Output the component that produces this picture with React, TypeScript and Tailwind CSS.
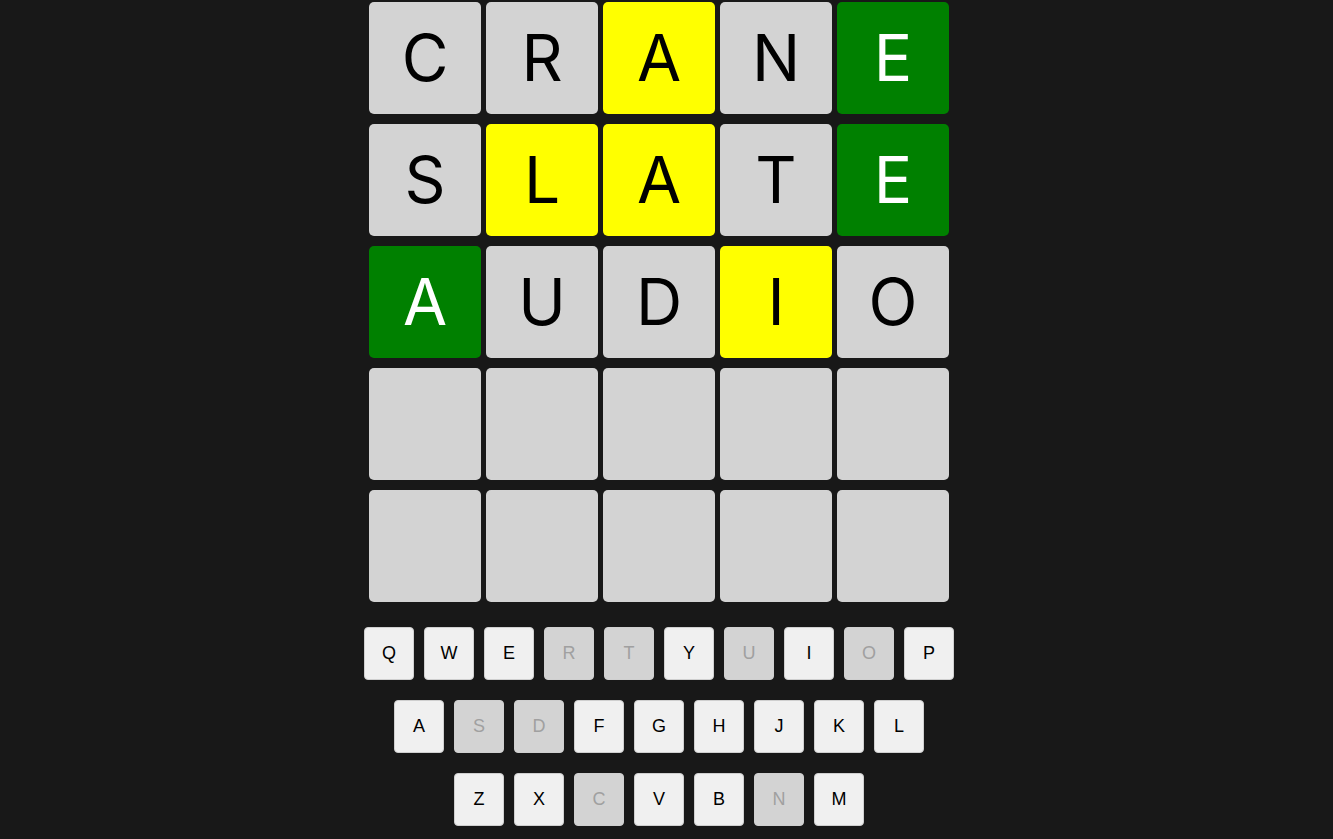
import React from "react";

type Tile = { letter: string; state: "gray" | "yellow" | "green" | "empty" };

const guesses = [
  ["C", "R", "A", "N", "E"],
  ["S", "L", "A", "T", "E"],
  ["A", "U", "D", "I", "O"],
];
const states: Tile["state"][][] = [
  ["gray", "gray", "yellow", "gray", "green"],
  ["gray", "yellow", "yellow", "gray", "green"],
  ["green", "gray", "gray", "yellow", "gray"],
];

const rows: Tile[][] = Array.from({ length: 5 }, (_, r) =>
  Array.from({ length: 5 }, (_, c) =>
    guesses[r] ? { letter: guesses[r][c], state: states[r][c] } : { letter: "", state: "empty" as const },
  ),
);

const tileClass = {
  gray: "bg-[#d3d3d3] text-black",
  empty: "bg-[#d3d3d3] text-black",
  yellow: "bg-[#ffff00] text-black",
  green: "bg-[#008000] text-white",
};

const keyRows = ["QWERTYUIOP", "ASDFGHJKL", "ZXCVBNM"];
const usedKeys = new Set(["R", "T", "U", "O", "S", "D", "C", "N"]);

export default function App() {
  return (
    <div className="min-h-screen bg-[#181818] flex flex-col items-center pt-[2px] pb-4 pr-[15px]">
      {/* Board */}
      <div className="flex flex-col gap-[10px]" style={{ fontFamily: "Inter, sans-serif" }}>
        {rows.map((row, r) => (
          <div key={r} className="flex gap-[5px]">
            {row.map((tile, c) => (
              <div
                key={c}
                className={`flex h-[112px] w-[112px] items-center justify-center rounded-[5px] text-[64px] leading-none ${tileClass[tile.state]}`}
              >
                {tile.letter}
              </div>
            ))}
          </div>
        ))}
      </div>

      {/* Keyboard */}
      <div className="mt-[25px] flex flex-col items-center gap-[20px]" style={{ fontFamily: "'Liberation Sans', Arial, sans-serif" }}>
        {keyRows.map((row) => (
          <div key={row} className="flex gap-[10px]">
            {row.split("").map((k) => (
              <button
                key={k}
                className={`h-[53px] w-[50px] rounded-[4px] border border-[#cfcfcf] text-[18px] ${
                  usedKeys.has(k) ? "bg-[#d3d3d3] text-[#a0a0a0]" : "bg-[#f0f0f0] text-black"
                }`}
              >
                {k}
              </button>
            ))}
          </div>
        ))}
      </div>
    </div>
  );
}
